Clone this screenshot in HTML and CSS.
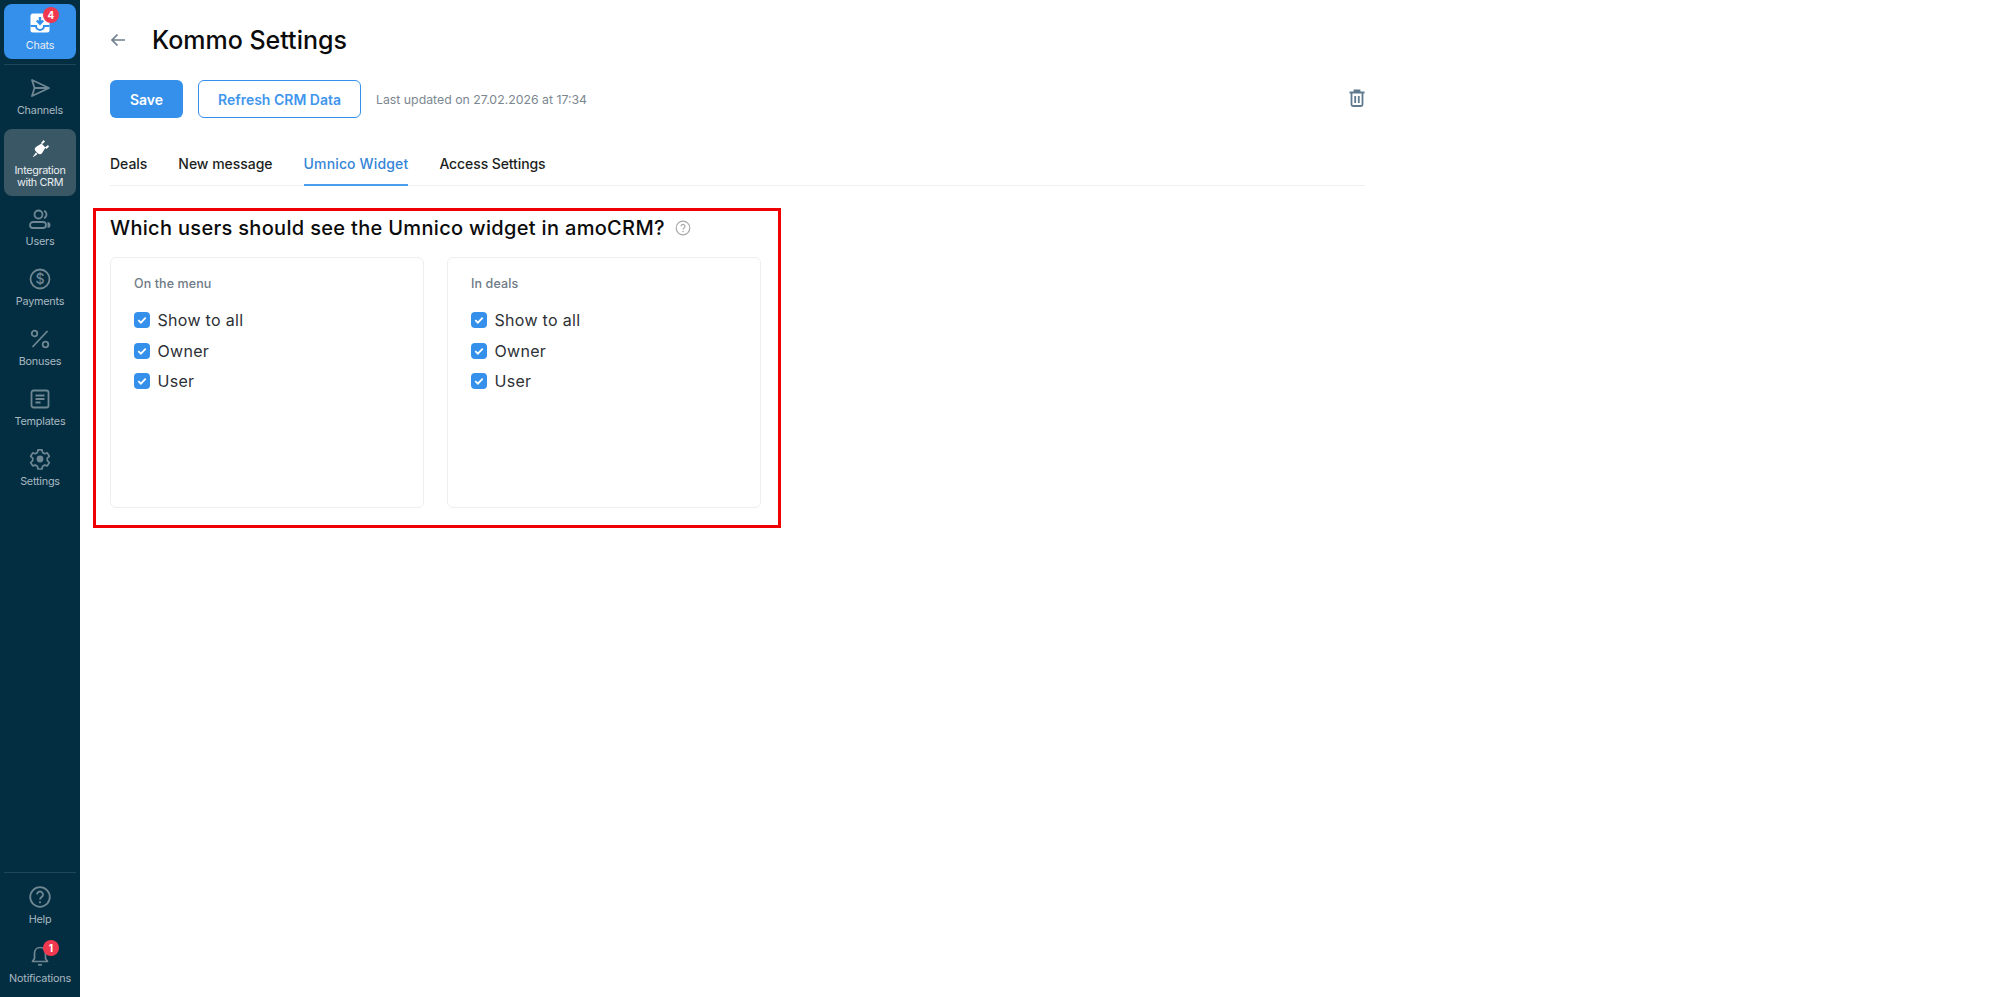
FILE: index.html
```html
<!DOCTYPE html>
<html lang="en">
<head>
<meta charset="utf-8">
<title>Kommo Settings</title>
<link rel="stylesheet" href="styles.css">
</head>
<body>
<div class="app">
  <aside class="sidebar">
    <nav class="nav nav-top">
      <a class="item item-chats">
        <span class="icon">
          <svg viewBox="0 0 24 24" width="24" height="24"><path fill="#fff" d="M5 2.500h14A2.500 2.500 0 0 1 21.500 5v14a2.500 2.500 0 0 1-2.500 2.500H5A2.500 2.500 0 0 1 2.500 19V5A2.500 2.500 0 0 1 5 2.500z"/><path fill="none" stroke="#3490eb" stroke-width="2" d="M2.500 15h5.500a4 4 0 0 0 8 0h5.500"/><path fill="none" stroke="#3490eb" stroke-width="2.400" d="M12 6v6.500M8.800 9.500l3.200 3.200 3.200-3.200"/></svg>
          <span class="badge">4</span>
        </span>
        <span class="label">Chats</span>
      </a>
      <div class="divider"></div>
      <a class="item">
        <span class="icon"><svg viewBox="0 0 24 24" width="24" height="24"><path fill="none" stroke="#6f8792" stroke-width="1.800" stroke-linejoin="round" d="M4 4l17 8-17 8 2.500-8zM6.500 12H21"/></svg></span>
        <span class="label">Channels</span>
      </a>
      <a class="item item-active">
        <span class="icon"><svg viewBox="0 0 24 24" width="24" height="24"><path fill="#fff" d="M13.500 6.500l4 4-3.200 5.200a3 3 0 0 1-4.300.800l-2.500-2.500a3 3 0 0 1 .800-4.300zM5 19.500l3-4 1.500 1.500-4 3zM13 6l2.500-3 1.500 1.500-2.500 2.500zM17 10.500l3-2.500 1 1.500-2.500 2.500z"/></svg></span>
        <span class="label label-tight">Integration<br>with CRM</span>
      </a>
      <a class="item">
        <span class="icon"><svg viewBox="0 0 24 24" width="24" height="24"><g fill="none" stroke="#6f8792" stroke-width="1.800"><circle cx="10.500" cy="7.500" r="4"/><path d="M5 21h10a2.500 2.500 0 0 0 0-6H5a2.500 2.500 0 0 0 0 6zM16 3.800a4 4 0 0 1 0 7.400"/></g><path fill="#6f8792" d="M19.500 15a3.200 3.200 0 0 1 3 3 3.200 3.200 0 0 1-3 3z"/></svg></span>
        <span class="label">Users</span>
      </a>
      <a class="item">
        <span class="icon"><svg viewBox="0 0 24 24" width="24" height="24"><circle cx="12" cy="12" r="9.500" fill="none" stroke="#6f8792" stroke-width="1.800"/><text x="12" y="17" class="dollar">$</text></svg></span>
        <span class="label">Payments</span>
      </a>
      <a class="item">
        <span class="icon"><svg viewBox="0 0 24 24" width="24" height="24"><g fill="none" stroke="#6f8792" stroke-width="1.800"><circle cx="6.500" cy="6.500" r="2.800"/><circle cx="17.500" cy="17.500" r="2.800"/><path d="M19.500 4L4.500 20"/></g></svg></span>
        <span class="label">Bonuses</span>
      </a>
      <a class="item">
        <span class="icon"><svg viewBox="0 0 24 24" width="24" height="24"><g fill="none" stroke="#6f8792" stroke-width="1.800"><rect x="3.500" y="3.500" width="17" height="17" rx="2"/><path d="M7.500 8.500h9M7.500 12h9M7.500 15.500h5"/></g></svg></span>
        <span class="label">Templates</span>
      </a>
      <a class="item">
        <span class="icon"><svg viewBox="0 0 24 24" width="24" height="24"><path fill="none" stroke="#6f8792" stroke-width="1.700" stroke-linejoin="round" d="M10 2.800h4l.6 2.700 2.100 1.200 2.600-.8 2 3.400-2 1.900v2.400l2 1.900-2 3.400-2.600-.8-2.100 1.200-.6 2.700h-4l-.6-2.700-2.100-1.200-2.600.8-2-3.400 2-1.900v-2.400l-2-1.900 2-3.400 2.600.8 2.100-1.200z"/><circle cx="12" cy="12" r="3.400" fill="#6f8792"/></svg></span>
        <span class="label">Settings</span>
      </a>
    </nav>
    <nav class="nav nav-bottom">
      <div class="divider"></div>
      <a class="item">
        <span class="icon"><svg viewBox="0 0 24 24" width="24" height="24"><circle cx="12" cy="12" r="9.800" fill="none" stroke="#6f8792" stroke-width="1.800"/><path fill="none" stroke="#6f8792" stroke-width="1.800" d="M9 9.500a3 3 0 1 1 4.500 2.600c-1 .6-1.500 1.200-1.500 2.400"/><circle cx="12" cy="17.300" r="1.100" fill="#6f8792"/></svg></span>
        <span class="label">Help</span>
      </a>
      <a class="item">
        <span class="icon">
          <svg viewBox="0 0 24 24" width="24" height="24"><path fill="none" stroke="#6f8792" stroke-width="1.700" stroke-linejoin="round" d="M12 3.500c3.500 0 5.500 2.500 5.500 6v5l2 3H4.500l2-3v-5c0-3.500 2-6 5.500-6z"/><path fill="none" stroke="#6f8792" stroke-width="1.700" d="M10 20.800h4"/></svg>
          <span class="badge">1</span>
        </span>
        <span class="label">Notifications</span>
      </a>
    </nav>
  </aside>
  <main class="main">
    <header class="title-row">
      <svg class="back" viewBox="0 0 16 14" width="16" height="14"><path fill="none" stroke="#6f7f8d" stroke-width="1.700" d="M15 7H2M7.500 1.500L2 7l5.500 5.500"/></svg>
      <h1>Kommo Settings</h1>
    </header>
    <div class="actions">
      <button class="btn btn-primary">Save</button>
      <button class="btn btn-outline">Refresh CRM Data</button>
      <span class="updated">Last updated on 27.02.2026 at 17:34</span>
      <svg class="trash" viewBox="0 0 16 18" width="16" height="18"><g fill="none" stroke="#5f7a8e" stroke-width="1.800"><path d="M2.500 4v11.500a1.500 1.500 0 0 0 1.500 1.500h8a1.500 1.500 0 0 0 1.500-1.500V4M0.500 3.500h15M5.500 3.500V1.500h5v2M6.200 7v7M9.800 7v7"/></g></svg>
    </div>
    <div class="tabs">
      <a class="tab">Deals</a>
      <a class="tab">New message</a>
      <a class="tab tab-active">Umnico Widget</a>
      <a class="tab tab-last">Access Settings</a>
    </div>
    <section class="panel">
      <h2>Which users should see the Umnico widget in amoCRM?
        <svg class="hint" viewBox="0 0 16 16" width="16" height="16"><circle cx="8" cy="8" r="6.800" fill="none" stroke="#a9a9a9" stroke-width="1.200"/><path fill="none" stroke="#a9a9a9" stroke-width="1.200" d="M6 6.300a2 2 0 1 1 3 1.800c-.7.400-1 .8-1 1.500"/><circle cx="8" cy="11.500" r=".8" fill="#a9a9a9"/></svg>
      </h2>
      <div class="cards">
        <div class="card">
          <div class="card-title">On the menu</div>
          <label class="check"><span class="box"><svg viewBox="0 0 16 16" width="16" height="16"><path fill="none" stroke="#fff" stroke-width="1.800" d="M4.300 8.200l2.600 2.500 4.800-5"/></svg></span>Show to all</label>
          <label class="check"><span class="box"><svg viewBox="0 0 16 16" width="16" height="16"><path fill="none" stroke="#fff" stroke-width="1.800" d="M4.300 8.200l2.600 2.500 4.800-5"/></svg></span>Owner</label>
          <label class="check"><span class="box"><svg viewBox="0 0 16 16" width="16" height="16"><path fill="none" stroke="#fff" stroke-width="1.800" d="M4.300 8.200l2.600 2.500 4.800-5"/></svg></span>User</label>
        </div>
        <div class="card">
          <div class="card-title">In deals</div>
          <label class="check"><span class="box"><svg viewBox="0 0 16 16" width="16" height="16"><path fill="none" stroke="#fff" stroke-width="1.800" d="M4.300 8.200l2.600 2.500 4.800-5"/></svg></span>Show to all</label>
          <label class="check"><span class="box"><svg viewBox="0 0 16 16" width="16" height="16"><path fill="none" stroke="#fff" stroke-width="1.800" d="M4.300 8.200l2.600 2.500 4.800-5"/></svg></span>Owner</label>
          <label class="check"><span class="box"><svg viewBox="0 0 16 16" width="16" height="16"><path fill="none" stroke="#fff" stroke-width="1.800" d="M4.300 8.200l2.600 2.500 4.800-5"/></svg></span>User</label>
        </div>
      </div>
    </section>
  </main>
</div>
</body>
</html>
```

FILE: styles.css
```css
* { box-sizing: border-box; }
html, body { margin: 0; height: 100%; overflow: hidden; }
body { background: #fff; font-family: Inter, "Noto Sans", "Liberation Sans", sans-serif; color: #111; }
.app { display: flex; height: 997px; }

.sidebar { width: 80px; flex: none; background: #032e42; display: flex; flex-direction: column; justify-content: space-between; padding: 4px 4px 0; }
.nav { display: flex; flex-direction: column; }
.divider { height: 1px; background: #1f4759; margin: 5px 0 4px; }
.item { display: flex; flex-direction: column; align-items: center; width: 72px; height: 60px; padding-top: 7px; border-radius: 8px; }
.item-chats { height: 55px; padding-top: 7px; background: #3490eb; }
.item-active { height: 67px; background: #3a5766; padding-top: 8px; margin-bottom: 4px; }
.icon { position: relative; width: 24px; height: 24px; flex: none; }
.icon svg { display: block; }
.label { margin-top: 5px; font-size: 10.800px; line-height: 12px; letter-spacing: -0.2px; text-align: center; color: #a9b9c1; white-space: nowrap; }
.item-chats .label, .item-active .label { color: #e8eef1; }
.item-chats .label { margin-top: 5px; }
.item-active .label { margin-top: 4px; }
.label-tight { letter-spacing: -0.35px; }
.badge { position: absolute; top: -4px; left: 15px; width: 16px; height: 16px; border-radius: 50%; background: #f0384f; color: #fff; font-size: 10px; font-weight: 700; line-height: 16px; text-align: center; }
.dollar { font: 500 14px Inter, sans-serif; fill: #6f8792; text-anchor: middle; }
.nav-bottom { padding-bottom: 1px; }
.nav-bottom .divider { margin: 0 0 5px; }
.nav-bottom .item { height: 59px; }

.main { flex: none; width: 1285px; padding: 0 0 0 30px; }
.title-row { display: flex; align-items: center; gap: 26px; height: 80px; }
.back { flex: none; }
h1 { margin: 0; font-size: 25px; line-height: 30px; font-weight: 500; color: #0b0b0b; }
.actions { display: flex; align-items: center; height: 38px; }
.btn { height: 38px; border-radius: 6px; font: 600 14px Inter, sans-serif; }
.btn-primary { width: 73px; border: 0; background: #3490eb; color: #fff; }
.btn-outline { width: 163px; margin-left: 15px; border: 1px solid #3490eb; background: #fff; color: #3f96ec; }
.updated { margin-left: 15px; font-size: 12.300px; color: #7c8791; }
.trash { margin-left: auto; align-self: flex-start; margin-top: 9px; }
.tabs { display: flex; gap: 31px; height: 41px; margin-top: 27px; border-bottom: 1px solid #eeeff1; width: 1255px; }
.tab { display: block; height: 41px; padding-top: 10px; font-size: 14px; line-height: 18px; font-weight: 500; letter-spacing: -0.03px; color: #1c1f22; }
.tab-active { color: #3585d6; letter-spacing: 0.15px; border-bottom: 2px solid #4a9eef; }
.tab-last { letter-spacing: -0.1px; }

.panel { width: 688px; height: 320px; margin: 22px 0 0 -17px; padding: 0 14px; border: 3px solid #f00000; }
h2 { display: flex; align-items: center; gap: 10px; margin: 0; height: 34px; font-size: 20px; letter-spacing: 0.32px; font-weight: 500; color: #0b0b0b; }
.hint { flex: none; }
.cards { display: flex; gap: 23px; margin-top: 12px; }
.card { width: 314px; height: 251px; padding: 19px 23px; border: 1px solid #eceef0; border-radius: 6px; }
.card-title { font-size: 12.500px; letter-spacing: 0.1px; line-height: 14px; font-weight: 500; color: #6e7a86; margin-bottom: 14px; }
.check { display: flex; align-items: center; gap: 7.500px; height: 30.500px; font-size: 16px; letter-spacing: 0.3px; font-weight: 400; color: #2c3136; }
.box { width: 16px; height: 16px; flex: none; border-radius: 4px; background: #3490eb; }
.box svg { display: block; }
```
